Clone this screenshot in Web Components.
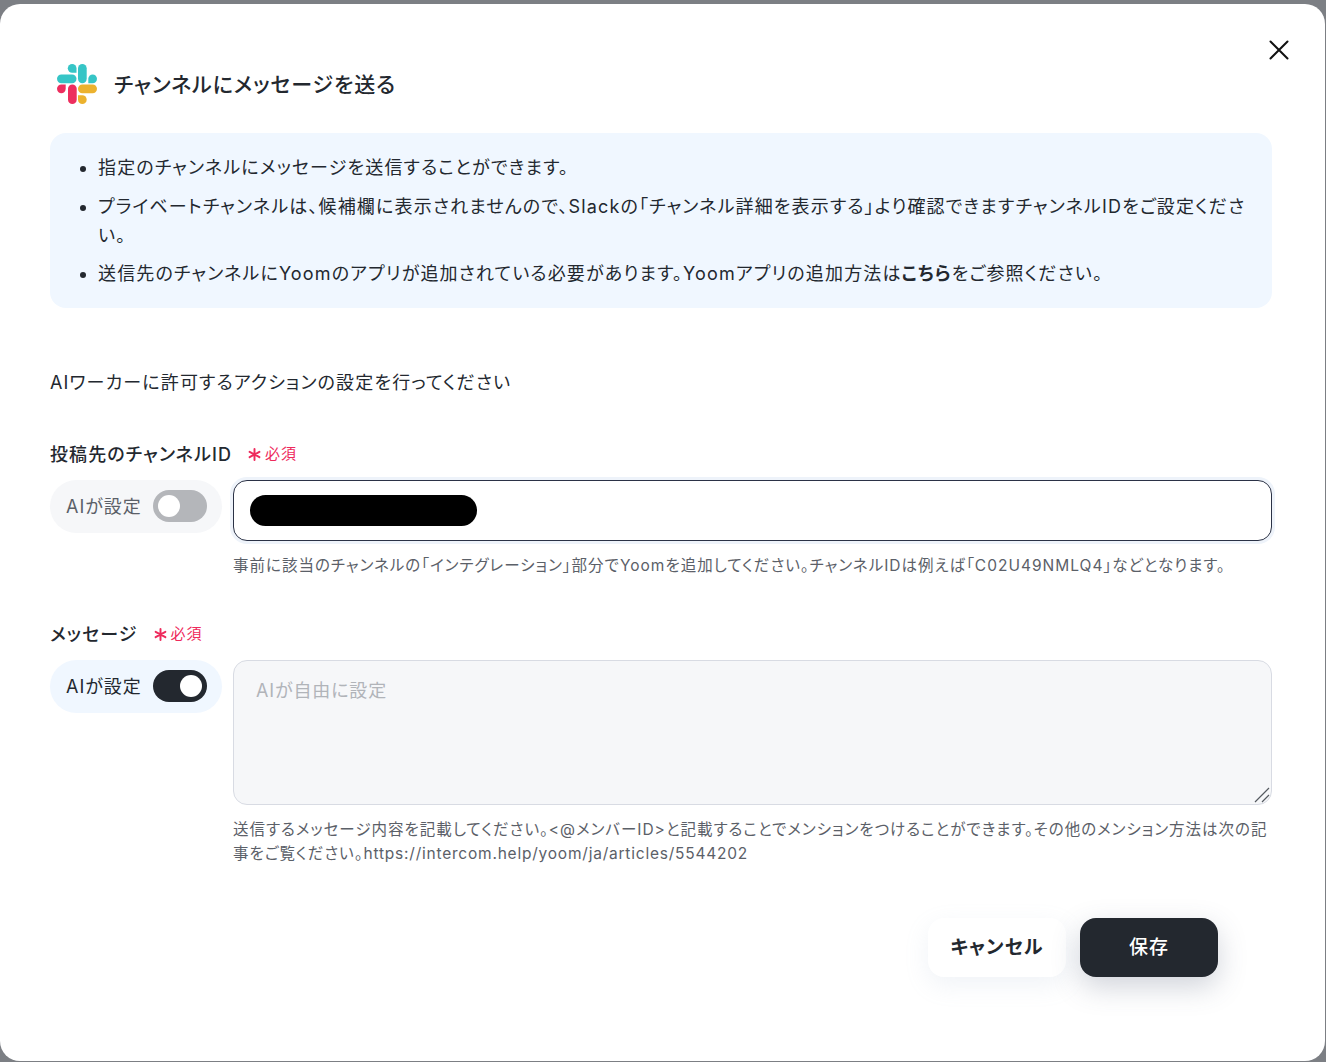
<!DOCTYPE html>
<html lang="ja">
<head>
<meta charset="utf-8">
<title>チャンネルにメッセージを送る</title>
<style>
    html, body { margin: 0; height: 100%; }
    body {
        background: #7c7f84;
        font-family: Inter, "Noto Sans CJK JP", sans-serif;
        color: #23282f;
        overflow: hidden;
        font-feature-settings: "palt";
    }
    .url { letter-spacing: .78px; }
</style>
</head>
<body>
<action-modal>
    <modal-header slot="header" title-text="チャンネルにメッセージを送る"></modal-header>
    <info-box>
        <li>指定のチャンネルにメッセージを送信することができます。</li>
        <li>プライベートチャンネルは、候補欄に表示されませんので、Slackの「チャンネル詳細を表示する」より確認できますチャンネルIDをご設定ください。</li>
        <li>送信先のチャンネルにYoomのアプリが追加されている必要があります。Yoomアプリの追加方法は<b>こちら</b>をご参照ください。</li>
    </info-box>
    <p class="lead">AIワーカーに許可するアクションの設定を行ってください</p>
    <form-field label="投稿先のチャンネルID" gap="42">
        <ai-toggle slot="toggle"></ai-toggle>
        <redacted-input></redacted-input>
        <span slot="hint">事前に該当のチャンネルの「インテグレーション」部分でYoomを追加してください。チャンネルIDは例えば「C02U49NMLQ4」などとなります。</span>
    </form-field>
    <form-field label="メッセージ" gap="41">
        <ai-toggle slot="toggle" on></ai-toggle>
        <message-area placeholder="AIが自由に設定"></message-area>
        <span slot="hint">送信するメッセージ内容を記載してください。&lt;@メンバーID&gt;と記載することでメンションをつけることができます。その他のメンション方法は次の記事をご覧ください。<span class="url">https://intercom.help/yoom/ja/articles/5544202</span></span>
    </form-field>
    <modal-actions></modal-actions>
</action-modal>

<script>
const base = `
    :host, * { box-sizing: border-box; }
`;

class ActionModal extends HTMLElement {
    constructor() {
        super();
        this.attachShadow({ mode: 'open' });
        this.shadowRoot.innerHTML = `
            <style>
                ${base}
                :host {
                    display: block;
                    margin: 4px 1px 1px 0;
                    height: 1057px;
                    background: #fff;
                    border-radius: 20px;
                    padding: 60px 53px 0 50px;
                    position: relative;
                }
                .close {
                    position: absolute;
                    top: 36px;
                    right: 36px;
                    width: 20px;
                    height: 20px;
                }
                ::slotted(p.lead) {
                    margin: 61px 0 0;
                    font-size: 18px;
                    line-height: 28px;
                    letter-spacing: 1.15px;
                }
            </style>
            <svg class="close" viewBox="0 0 20 20" fill="none" stroke="#111" stroke-width="2" stroke-linecap="round">
                <path d="M1.5 1.5 18.5 18.5M18.5 1.5 1.5 18.5"/>
            </svg>
            <slot name="header"></slot>
            <slot></slot>
        `;
    }
}

class ModalHeader extends HTMLElement {
    constructor() {
        super();
        this.attachShadow({ mode: 'open' });
        this.shadowRoot.innerHTML = `
            <style>
                ${base}
                :host {
                    display: flex;
                    align-items: center;
                    gap: 17px;
                    height: 40px;
                    padding-left: 7px;
                }
                h1 {
                    margin: 0 0 3px;
                    font-size: 21px;
                    font-weight: 500;
                    letter-spacing: .9px;
                }
                svg { width: 40px; height: 40px; flex: none; }
            </style>
            <svg viewBox="0 0 40 40">
                <g fill="#36c5c6">
                    <rect x="0" y="10.5" width="19.5" height="8.7" rx="4.35"/>
                    <path d="M19.5 8.7h-4.35a4.35 4.35 0 1 1 4.35-4.35z"/>
                    <rect x="21" y="0" width="8.7" height="19.2" rx="4.35"/>
                    <path d="M31.3 19.2h4.35a4.35 4.35 0 1 0-4.35-4.35z"/>
                </g>
                <g fill="#ed2e5e">
                    <path d="M8.7 20.5H4.35a4.35 4.35 0 1 0 4.35 4.35z"/>
                    <rect x="11" y="20.5" width="8.7" height="19.5" rx="4.35"/>
                </g>
                <g fill="#ecb22e">
                    <rect x="21" y="20.5" width="19" height="8.7" rx="4.35"/>
                    <path d="M21 31.3h4.35a4.35 4.35 0 1 1-4.35 4.35z"/>
                </g>
            </svg>
            <h1>${this.getAttribute('title-text')}</h1>
        `;
    }
}

class InfoBox extends HTMLElement {
    constructor() {
        super();
        this.attachShadow({ mode: 'open' });
        this.shadowRoot.innerHTML = `
            <style>
                ${base}
                :host {
                    display: block;
                    margin-top: 29px;
                    background: #f0f7ff;
                    border-radius: 16px;
                    padding: 21px 20px 18.8px 48px;
                    font-size: 18px;
                    line-height: 28.8px;
                    letter-spacing: 1.15px;
                }
                ul { margin: 0; padding: 0; display: flex; flex-direction: column; gap: 10px; }
                ::slotted(li) { margin: 0; }
            </style>
            <ul><slot></slot></ul>
        `;
    }
}

class AiToggle extends HTMLElement {
    constructor() {
        super();
        this.attachShadow({ mode: 'open' });
        const on = this.hasAttribute('on');
        this.shadowRoot.innerHTML = `
            <style>
                ${base}
                :host {
                    display: flex;
                    align-items: center;
                    justify-content: space-between;
                    width: 172px;
                    height: 53px;
                    border-radius: 27px;
                    padding: 0 15px 0 16px;
                    background: ${on ? '#f0f7ff' : '#f6f7f9'};
                    color: ${on ? '#23282f' : '#5b6068'};
                    font-size: 18px;
                    letter-spacing: 1px;
                }
                .text { padding-bottom: 3px; }
                .track {
                    width: 54px;
                    height: 32px;
                    border-radius: 16px;
                    background: ${on ? '#23282f' : '#b4b6ba'};
                    display: flex;
                    align-items: center;
                    justify-content: ${on ? 'flex-end' : 'flex-start'};
                    padding: 0 5px;
                }
                .knob { width: 22px; height: 22px; border-radius: 50%; background: #fff; }
            </style>
            <span class="text">AIが設定</span>
            <span class="track"><span class="knob"></span></span>
        `;
    }
}

class FormField extends HTMLElement {
    constructor() {
        super();
        this.attachShadow({ mode: 'open' });
        this.shadowRoot.innerHTML = `
            <style>
                ${base}
                :host { display: block; margin-top: ${this.getAttribute('gap')}px; }
                .label {
                    display: flex;
                    align-items: center;
                    gap: 16px;
                    height: 28px;
                    font-size: 18px;
                    font-weight: 500;
                    letter-spacing: 1.1px;
                }
                .req {
                    display: flex;
                    align-items: center;
                    gap: 4px;
                    color: #ee2a5c;
                    font-size: 15px;
                    font-weight: 400;
                    letter-spacing: .9px;
                }
                .req svg { width: 13px; height: 13px; margin-top: 3px; }
                .row {
                    display: grid;
                    grid-template-columns: 172px 1fr;
                    column-gap: 11px;
                    margin-top: 13px;
                    align-items: start;
                }
                .hint {
                    grid-column: 2;
                    margin: 13px 0 0;
                    font-size: 15.5px;
                    line-height: 24px;
                    letter-spacing: 1px;
                    color: #5b6068;
                }
            </style>
            <div class="label">
                <span>${this.getAttribute('label')}</span>
                <span class="req">
                    <svg viewBox="0 0 12 12" fill="none" stroke="currentColor" stroke-width="1.8" stroke-linecap="round">
                        <path d="M6 1v10M1.5 3.5l9 5M10.5 3.5l-9 5"/>
                    </svg>必須</span>
            </div>
            <div class="row">
                <slot name="toggle"></slot>
                <slot></slot>
                <p class="hint"><slot name="hint"></slot></p>
            </div>
        `;
    }
}

class RedactedInput extends HTMLElement {
    constructor() {
        super();
        this.attachShadow({ mode: 'open' });
        this.shadowRoot.innerHTML = `
            <style>
                ${base}
                :host {
                    display: flex;
                    align-items: center;
                    height: 61px;
                    background: #fff;
                    border: 1px solid #2b3246;
                    border-radius: 14px;
                    box-shadow: 0 0 0 3px #eef3fa;
                    padding-left: 16px;
                }
                .mask { width: 227px; height: 31px; border-radius: 15.5px; background: #000; }
            </style>
            <span class="mask"></span>
        `;
    }
}

class MessageArea extends HTMLElement {
    constructor() {
        super();
        this.attachShadow({ mode: 'open' });
        this.shadowRoot.innerHTML = `
            <style>
                ${base}
                :host {
                    display: block;
                    position: relative;
                    height: 145px;
                    background: #f6f7f9;
                    border: 1px solid #d8dbe3;
                    border-radius: 14px;
                    padding: 16px 22px;
                    font-size: 18px;
                    line-height: 28px;
                    letter-spacing: .85px;
                    color: #b1b4b9;
                }
                svg { position: absolute; right: 1px; bottom: 1px; width: 16px; height: 16px; }
            </style>
            <span>${this.getAttribute('placeholder')}</span>
            <svg viewBox="0 0 16 16" fill="none" stroke="#555a60" stroke-width="1.2">
                <path d="M1 15 15 1M8 15 15 8"/>
            </svg>
        `;
    }
}

class ModalActions extends HTMLElement {
    constructor() {
        super();
        this.attachShadow({ mode: 'open' });
        this.shadowRoot.innerHTML = `
            <style>
                ${base}
                :host {
                    display: flex;
                    justify-content: flex-end;
                    gap: 14px;
                    margin-top: 52px;
                    padding-right: 54px;
                }
                button {
                    width: 138px;
                    height: 59px;
                    border: 0;
                    border-radius: 16px;
                    padding: 0 0 3px;
                    font: inherit;
                    font-size: 19px;
                    font-weight: 600;
                    letter-spacing: 1.1px;
                }
                .cancel { background: #fff; color: #23282f; box-shadow: 0 8px 24px rgba(150, 170, 200, .14); }
                .save { background: #23282f; color: #fff; font-weight: 500; box-shadow: 0 10px 28px rgba(70, 85, 110, .25); }
            </style>
            <button class="cancel">キャンセル</button>
            <button class="save">保存</button>
        `;
    }
}

customElements.define('action-modal', ActionModal);
customElements.define('modal-header', ModalHeader);
customElements.define('info-box', InfoBox);
customElements.define('ai-toggle', AiToggle);
customElements.define('form-field', FormField);
customElements.define('redacted-input', RedactedInput);
customElements.define('message-area', MessageArea);
customElements.define('modal-actions', ModalActions);
</script>
</body>
</html>
